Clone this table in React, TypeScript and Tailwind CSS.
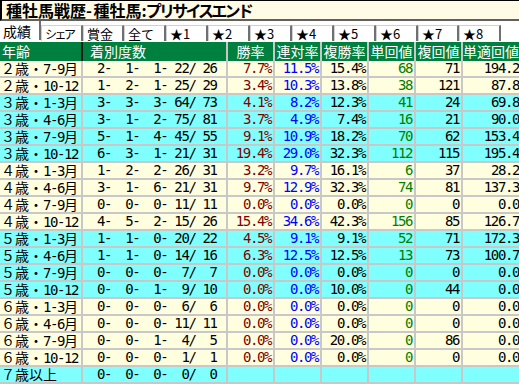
import React from 'react';

const MONO = "[font-family:'DejaVu_Sans_Mono','Noto_Sans_CJK_JP',monospace] text-[14px] tracking-[-1.4px]";
const CJK = "[font-family:'Noto_Sans_CJK_JP',sans-serif] text-[14px]";

type Row = [string, number[], string, string, string, string, string, string, boolean];

const rows: Row[] = [
  ['２歳・7-9月', [2, 1, 1, 22, 26], '7.7%', '11.5%', '15.4%', '68', '71', '194.2', false],
  ['２歳・10-12', [1, 2, 1, 25, 29], '3.4%', '10.3%', '13.8%', '38', '121', '87.8', false],
  ['３歳・1-3月', [3, 3, 3, 64, 73], '4.1%', '8.2%', '12.3%', '41', '24', '69.8', true],
  ['３歳・4-6月', [3, 1, 2, 75, 81], '3.7%', '4.9%', '7.4%', '16', '21', '90.0', true],
  ['３歳・7-9月', [5, 1, 4, 45, 55], '9.1%', '10.9%', '18.2%', '70', '62', '153.4', true],
  ['３歳・10-12', [6, 3, 1, 21, 31], '19.4%', '29.0%', '32.3%', '112', '115', '195.4', true],
  ['４歳・1-3月', [1, 2, 2, 26, 31], '3.2%', '9.7%', '16.1%', '6', '37', '28.2', false],
  ['４歳・4-6月', [3, 1, 6, 21, 31], '9.7%', '12.9%', '32.3%', '74', '81', '137.3', false],
  ['４歳・7-9月', [0, 0, 0, 11, 11], '0.0%', '0.0%', '0.0%', '0', '0', '0.0', false],
  ['４歳・10-12', [4, 5, 2, 15, 26], '15.4%', '34.6%', '42.3%', '156', '85', '126.7', false],
  ['５歳・1-3月', [1, 1, 0, 20, 22], '4.5%', '9.1%', '9.1%', '52', '71', '172.3', true],
  ['５歳・4-6月', [1, 1, 0, 14, 16], '6.3%', '12.5%', '12.5%', '13', '73', '100.7', true],
  ['５歳・7-9月', [0, 0, 0, 7, 7], '0.0%', '0.0%', '0.0%', '0', '0', '0.0', true],
  ['５歳・10-12', [0, 0, 1, 9, 10], '0.0%', '0.0%', '10.0%', '0', '44', '0.0', true],
  ['６歳・1-3月', [0, 0, 0, 6, 6], '0.0%', '0.0%', '0.0%', '0', '0', '0.0', false],
  ['６歳・4-6月', [0, 0, 0, 11, 11], '0.0%', '0.0%', '0.0%', '0', '0', '0.0', false],
  ['６歳・7-9月', [0, 0, 1, 4, 5], '0.0%', '0.0%', '20.0%', '0', '86', '0.0', false],
  ['６歳・10-12', [0, 0, 0, 1, 1], '0.0%', '0.0%', '0.0%', '0', '0', '0.0', false],
  ['７歳以上', [0, 0, 0, 0, 0], '', '', '', '', '', '', true],
];

const tabs = ['成績', 'シェア', '賞金', '全て', '★1', '★2', '★3', '★4', '★5', '★6', '★7', '★8'];
const tabW = [41, 42, 41, 42, 42, 42, 42, 42, 42, 42, 41, 42];

const pad = (n: number) => String(n).padStart(3, ' ');
const counts = (c: number[]) => `${pad(c[0])}-${pad(c[1])}-${pad(c[2])}-${pad(c[3])}/${pad(c[4])}`;

function Mixed({ text }: { text: string }) {
  const runs: { cjk: boolean; s: string }[] = [];
  for (const ch of text) {
    const cjk = ch.charCodeAt(0) > 255;
    const last = runs[runs.length - 1];
    if (last && last.cjk === cjk) last.s += ch;
    else runs.push({ cjk, s: ch });
  }
  return (
    <>
      {runs.map((r, i) => (
        <span key={i} className={r.cjk ? CJK : MONO}>
          {r.s}
        </span>
      ))}
    </>
  );
}

function Num({ w, color, children }: { w: string; color: string; children: string }) {
  return (
    <div className={`${w} shrink-0 border-r-2 border-[#c8c8c8] pr-[2px] text-right whitespace-pre ${MONO} ${color}`}>
      {children}
    </div>
  );
}

export default function App() {
  return (
    <div className="w-[519px] h-[384px] overflow-hidden bg-white text-black">
      <div className="h-[21px] bg-[#fffbe4] border-t border-l-2 border-black border-b-2 border-b-[#606060] pl-[4px] leading-[18px] font-bold text-[16px] [font-family:'Noto_Sans_CJK_JP',sans-serif] whitespace-nowrap">
        種牡馬戦歴<span className="tracking-[-1px]">- </span>種牡馬<span className="tracking-[-1px]">:</span>
        <span className="tracking-[-2.8px]">プリサイスエンド</span>
      </div>

      <div className="flex h-[21px] text-[13px] [font-family:'Noto_Sans_CJK_JP',sans-serif]">
        {tabs.map((t, i) =>
          i === 0 ? (
            <div key={t} style={{ width: tabW[i] }} className="shrink-0 h-[19px] border-r-2 border-[#707070] pl-[3px] pt-[3px] leading-[15px] text-[14px]">
              {t}
            </div>
          ) : (
            <div key={t} style={{ width: tabW[i] }} className="shrink-0 mt-[4px] h-[16px] border-t border-l border-[#d0d0d0] border-r-2 border-r-[#707070] pl-[3px] leading-[15px] whitespace-nowrap">
              {t === 'シェア' ? <span className="text-[12px] tracking-[-2.5px]">{t}</span> : t}
            </div>
          )
        )}
      </div>

      <div className="flex h-[19px] bg-[#00803f] text-white leading-[19px] [font-family:'Noto_Sans_CJK_JP',sans-serif] text-[14px]">
        <div className="w-[83px] shrink-0 border-r-2 border-[#1a1a1a] pl-[2px]">年齢</div>
        <div className="w-[145px] shrink-0 border-r-2 border-[#c8c8c8] pl-[7px]">着別度数</div>
        <div className="w-[47px] shrink-0 border-r-2 border-[#c8c8c8] text-center">勝率</div>
        <div className="w-[47px] shrink-0 border-r-2 border-[#c8c8c8] text-center">連対率</div>
        <div className="w-[47px] shrink-0 border-r-2 border-[#c8c8c8] text-center">複勝率</div>
        <div className="w-[47px] shrink-0 border-r-2 border-[#c8c8c8] text-center">単回値</div>
        <div className="w-[47px] shrink-0 border-r-2 border-[#c8c8c8] text-center">複回値</div>
        <div className="w-[60px] shrink-0 whitespace-nowrap">単適回値</div>
      </div>

      {rows.map((r) => (
        <div key={r[0]} className={`flex h-[17px] border-b-2 border-[#c8c8c8] leading-[15px] ${r[8] ? 'bg-[#80ffff]' : 'bg-[#ffffe0]'}`}>
          <div className="w-[83px] shrink-0 border-r-2 border-[#c8c8c8] pl-[1px] whitespace-pre">
            <Mixed text={r[0]} />
          </div>
          <div className={`w-[145px] shrink-0 border-r-2 border-[#c8c8c8] whitespace-pre ${MONO}`}>{counts(r[1])}</div>
          <Num w="w-[47px]" color="text-[#800000]">{r[2]}</Num>
          <Num w="w-[47px]" color="text-[#0000ff]">{r[3]}</Num>
          <Num w="w-[47px]" color="text-black">{r[4]}</Num>
          <Num w="w-[47px]" color="text-[#008000]">{r[5]}</Num>
          <Num w="w-[47px]" color="text-black">{r[6]}</Num>
          <div className={`w-[60px] shrink-0 pr-[4px] text-right whitespace-pre ${MONO}`}>{r[7]}</div>
        </div>
      ))}
    </div>
  );
}
